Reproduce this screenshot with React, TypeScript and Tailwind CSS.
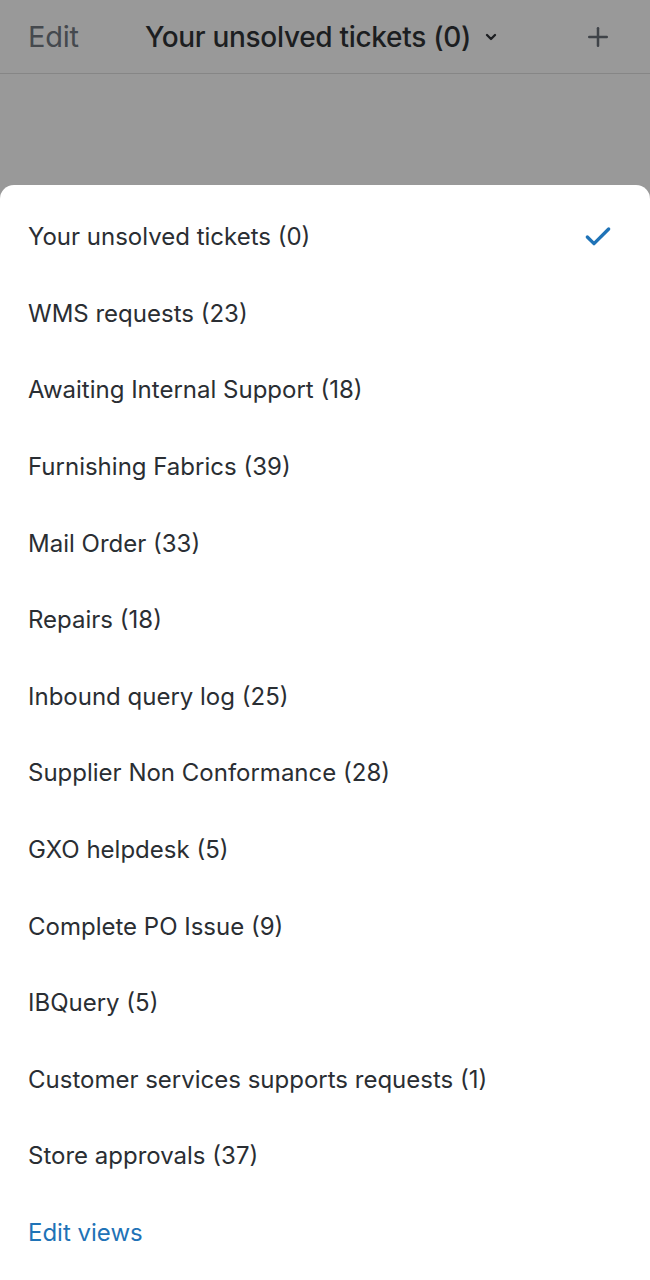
import { Check, ChevronDown, Plus } from 'lucide-react';

const views = [
  { name: 'Your unsolved tickets', count: 0, selected: true },
  { name: 'WMS requests', count: 23 },
  { name: 'Awaiting Internal Support', count: 18 },
  { name: 'Furnishing Fabrics', count: 39 },
  { name: 'Mail Order', count: 33 },
  { name: 'Repairs', count: 18 },
  { name: 'Inbound query log', count: 25 },
  { name: 'Supplier Non Conformance', count: 28 },
  { name: 'GXO helpdesk', count: 5 },
  { name: 'Complete PO Issue', count: 9 },
  { name: 'IBQuery', count: 5 },
  { name: 'Customer services supports requests', count: 1 },
  { name: 'Store approvals', count: 37 },
];

export default function App() {
  return (
    <div className="h-[1280px] w-[650px] overflow-hidden bg-[#999999] flex flex-col font-['Inter',sans-serif]">
      {/* Header (dimmed behind sheet) */}
      <div className="h-[74px] shrink-0 flex items-center pl-7 pr-[37px] border-b border-[#868686]">
        <span className="text-[29px] text-[#45494e] tracking-[-0.2px]">Edit</span>
        <div className="flex items-center gap-3 ml-[66px]">
          <span className="text-[28px] font-medium text-[#1c1e21] tracking-[-0.3px]">
            Your unsolved tickets (0)
          </span>
          <ChevronDown className="w-4 h-4 text-[#1c1e21]" strokeWidth={3.5} />
        </div>
        <Plus className="ml-auto w-[30px] h-[30px] text-[#3f4348]" strokeWidth={2} />
      </div>

      <div className="h-[111px] shrink-0" />

      {/* Bottom sheet */}
      <div className="flex-1 bg-white rounded-t-[14px] pt-[14px]">
        {views.map((v) => (
          <div key={v.name} className="h-[76.6px] flex items-center justify-between pl-7 pr-9">
            <span className="text-[24px] text-[#2a2e33]">
              {v.name} ({v.count})
            </span>
            {v.selected && <Check className="w-8 h-8 text-[#1f73b7]" strokeWidth={2.5} />}
          </div>
        ))}
        <div className="h-[76.6px] flex items-center pl-7">
          <span className="text-[24px] text-[#1f73b7]">Edit views</span>
        </div>
      </div>
    </div>
  );
}
